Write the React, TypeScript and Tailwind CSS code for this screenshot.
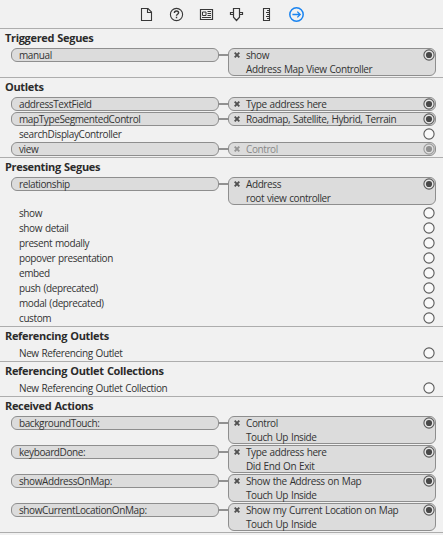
import React from "react";

type Item = {
  name: string;
  target?: [string, string?];
  dimmed?: boolean;
};

type Group = { title: string; items: Item[] };

const groups: Group[] = [
  {
    title: "Triggered Segues",
    items: [{ name: "manual", target: ["show", "Address Map View Controller"] }],
  },
  {
    title: "Outlets",
    items: [
      { name: "addressTextField", target: ["Type address here"] },
      { name: "mapTypeSegmentedControl", target: ["Roadmap, Satellite, Hybrid, Terrain"] },
      { name: "searchDisplayController" },
      { name: "view", target: ["Control"], dimmed: true },
    ],
  },
  {
    title: "Presenting Segues",
    items: [
      { name: "relationship", target: ["Address", "root view controller"] },
      { name: "show" },
      { name: "show detail" },
      { name: "present modally" },
      { name: "popover presentation" },
      { name: "embed" },
      { name: "push (deprecated)" },
      { name: "modal (deprecated)" },
      { name: "custom" },
    ],
  },
  { title: "Referencing Outlets", items: [{ name: "New Referencing Outlet" }] },
  { title: "Referencing Outlet Collections", items: [{ name: "New Referencing Outlet Collection" }] },
  {
    title: "Received Actions",
    items: [
      { name: "backgroundTouch:", target: ["Control", "Touch Up Inside"] },
      { name: "keyboardDone:", target: ["Type address here", "Did End On Exit"] },
      { name: "showAddressOnMap:", target: ["Show the Address on Map", "Touch Up Inside"] },
      { name: "showCurrentLocationOnMap:", target: ["Show my Current Location on Map", "Touch Up Inside"] },
    ],
  },
];

function Toolbar() {
  return (
    <header className="flex h-7 items-center justify-center gap-[15px] pt-px text-[#383838]">
      <svg width="15" height="15" viewBox="0 0 15 15" fill="none" stroke="currentColor" strokeWidth="1.1">
        <path d="M2.5 1.5h6.5l3.5 3.5v8.5h-10zM8.5 1.5v4h4" />
      </svg>
      <svg width="15" height="15" viewBox="0 0 15 15" fill="none" stroke="currentColor" strokeWidth="1.1">
        <circle cx="7.5" cy="7.5" r="6.1" />
        <path d="M5.4 6c0-1.3.9-2 2.1-2s2.1.7 2.1 1.8c0 1.5-2.1 1.5-2.1 3M7.5 9.8v1.4" strokeWidth="1.4" />
      </svg>
      <svg width="15" height="15" viewBox="0 0 15 15" fill="none" stroke="currentColor">
        <path d="M1.5 2.5h12v10h-12z" strokeWidth="1.2" />
        <path d="M3.5 5h3.5v3.5h-3.5zM8.5 4.5H12M8.5 6.5H12M8.5 8.5H12M3 10.5h9" />
      </svg>
      <svg width="15" height="15" viewBox="0 0 15 15" fill="none" stroke="currentColor" strokeWidth="1.2">
        <path d="M4.5 1.5h6v8.7l-3 3.3-3-3.3zM4.5 5.5h-3v2h3M10.5 5.5h3v2h-3" />
      </svg>
      <svg width="15" height="15" viewBox="0 0 15 15" fill="none" stroke="currentColor" strokeWidth="1.1">
        <path d="M4.5 1.5h6v12h-6zM10.5 3.5H8M10.5 5.5H7M10.5 7.5H8M10.5 9.5H7M10.5 11.5H8" />
      </svg>
      <svg width="15" height="15" viewBox="0 0 15 15" fill="none" stroke="#1a84f0">
        <circle cx="7.5" cy="7.5" r="6.7" strokeWidth="1.5" />
        <path d="M3.4 7.5h7.8M8.3 4.6l2.9 2.9-2.9 2.9" strokeWidth="1.3" />
      </svg>
    </header>
  );
}

function Socket({ filled = false }: { filled?: boolean }) {
  return (
    <svg className="shrink-0" width="12" height="14" viewBox="0 0 12 14">
      <circle cx="6" cy="7" r="5.1" fill={filled ? "#e6e6e6" : "#f9f9f9"} stroke="#5a5a5a" strokeWidth="1.1" />
      {filled && <circle cx="6" cy="7" r="3.1" fill="#484848" />}
    </svg>
  );
}

function Row({ item }: { item: Item }) {
  const { name, target, dimmed } = item;
  if (!target) {
    return (
      <div className="mb-px flex h-3.5 justify-between pl-[19px] pr-2">
        <span>{name}</span>
        <Socket />
      </div>
    );
  }
  return (
    <div className="mb-px flex items-start pl-[11px]">
      <div className="flex h-3.5 w-52 rounded-[6px] border border-[#8e8e8e] bg-[#dcdcdc] pl-[7px]">
        <span className="-mt-px">{name}</span>
      </div>
      <div className="mt-1.5 h-0.5 w-[9px] bg-[#919191]" />
      <div className="w-52 rounded-[6px] border border-[#8e8e8e] bg-[#dcdcdc]">
        <div className={dimmed ? "-my-px flex h-3.5 opacity-50" : "-my-px flex h-3.5"}>
          <svg className="ml-[5px] mr-[6px] mt-1 shrink-0" width="6" height="6" viewBox="0 0 6 6">
            <path d="M.7.7l4.6 4.6M5.3.7L.7 5.3" stroke="#505050" strokeWidth="1.9" />
          </svg>
          <span className="grow">{target[0]}</span>
          <Socket filled />
        </div>
        {target[1] && <div className="-mb-px mt-px h-3.5 pl-[17px]">{target[1]}</div>}
      </div>
    </div>
  );
}

export default function App() {
  return (
    <main className="h-[535px] w-[443px] overflow-hidden whitespace-nowrap bg-[#f1f1f1] font-['Open_Sans','Noto_Sans',sans-serif] text-[10px] leading-[14px] tracking-[-0.4px] text-[#333] [word-spacing:0.7px]">
      <Toolbar />
      {groups.map((g) => (
        <section key={g.title} className="border-t border-[#adadad]">
          <h2 className="h-[19px] pl-[5px] text-[11px] font-bold leading-[18px] tracking-[-0.33px] text-[#2b2b2b]">{g.title}</h2>
          {g.items.map((item) => (
            <Row key={item.name} item={item} />
          ))}
        </section>
      ))}
      <div className="h-px bg-[#adadad]" />
    </main>
  );
}
